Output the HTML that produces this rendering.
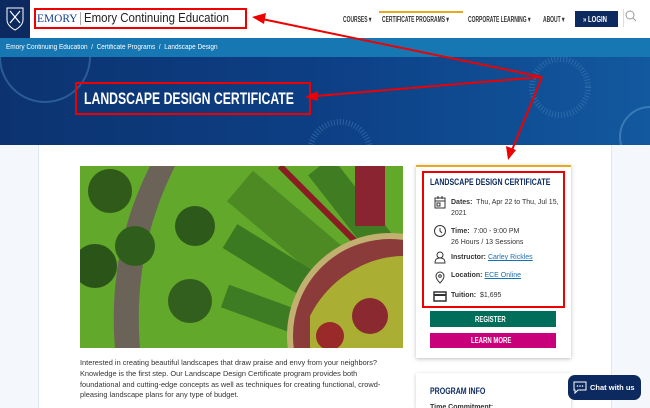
<!DOCTYPE html>
<html><head><style>
*{margin:0;padding:0;box-sizing:border-box}
html,body{width:650px;height:408px;overflow:hidden}
body{position:relative;font-family:"Liberation Sans",sans-serif;background:#fff}
.abs{position:absolute}
.cond{font-family:"Liberation Sans",sans-serif;font-weight:bold;transform-origin:left top;white-space:nowrap}
</style></head><body>
<!-- header -->
<div class="abs" style="left:0;top:0;width:30px;height:38px;background:#0c2a5f">
<svg width="30" height="38" viewBox="0 0 30 38"><path d="M7 8h16v12c0 6-8 10-8 10s-8-4-8-10z" fill="none" stroke="#fff" stroke-width="1"/><path d="M10 11l10 12M20 11l-10 12" stroke="#fff" stroke-width="1.2"/></svg></div>
<div class="abs" style="left:34px;top:8px;width:213px;height:21px;border:2px solid #e00"></div>
<div class="abs" style="left:37px;top:11px;font-family:'Liberation Serif',serif;font-size:12px;color:#123f8a;transform:scaleX(.95);transform-origin:left">EMORY</div>
<div class="abs" style="left:80px;top:12px;width:1px;height:13px;background:#aaa"></div>
<div class="abs" style="left:84px;top:10px;font-size:13px;color:#222;transform:scaleX(.88);transform-origin:left;white-space:nowrap">Emory Continuing Education</div>
<div class="abs cond" style="left:343px;top:15px;font-size:8px;color:#333;transform:scaleX(.62)">COURSES ▾</div>
<div class="abs" style="left:379px;top:11px;width:84px;height:2px;background:#e8a820"></div>
<div class="abs cond" style="left:382px;top:15px;font-size:8px;color:#333;transform:scaleX(.62)">CERTIFICATE PROGRAMS ▾</div>
<div class="abs cond" style="left:468px;top:15px;font-size:8px;color:#333;transform:scaleX(.62)">CORPORATE LEARNING ▾</div>
<div class="abs cond" style="left:543px;top:15px;font-size:8px;color:#333;transform:scaleX(.62)">ABOUT ▾</div>
<div class="abs" style="left:575px;top:11px;width:43px;height:16px;background:#0c2a5f"></div>
<div class="abs cond" style="left:583px;top:15px;font-size:8px;color:#fff;transform:scaleX(.75)">» LOGIN</div>
<div class="abs" style="left:623px;top:9px;width:1px;height:18px;background:#ddd"></div>
<svg class="abs" style="left:625px;top:10px" width="12" height="12"><circle cx="5" cy="5" r="4" fill="none" stroke="#999"/><path d="M8 8l3 3" stroke="#999"/></svg>
<!-- breadcrumb -->
<div class="abs" style="left:0;top:38px;width:650px;height:19px;background:#1777b2"></div>
<div class="abs" style="left:6px;top:44px;font-size:7px;color:#fff;white-space:nowrap;transform:scaleX(.92);transform-origin:left">Emory Continuing Education &nbsp;/&nbsp; Certificate Programs &nbsp;/&nbsp; Landscape Design</div>
<!-- hero -->
<div class="abs" style="left:0;top:57px;width:650px;height:88px;background:linear-gradient(90deg,#0c3370 0%,#0d3f85 50%,#12599f 100%);overflow:hidden">
<svg width="650" height="88"><circle cx="560" cy="30" r="28" fill="none" stroke="#2c6aa8" stroke-width="6" stroke-dasharray="1 2"/><circle cx="340" cy="95" r="30" fill="none" stroke="#2a62a0" stroke-width="6" stroke-dasharray="1 2"/><circle cx="45" cy="0" r="45" fill="none" stroke="#2a5c96" stroke-width="2"/><circle cx="650" cy="80" r="30" fill="none" stroke="#3a7ab4" stroke-width="2"/></svg></div>
<div class="abs" style="left:75px;top:82px;width:236px;height:33px;border:2px solid #e00"></div>
<div class="abs cond" style="left:84px;top:89px;font-size:17px;color:#fff;transform:scaleX(.72)">LANDSCAPE DESIGN CERTIFICATE</div>
<!-- side strips -->
<div class="abs" style="left:0;top:145px;width:39px;height:263px;background:#f4f8fc;border-right:1px solid #dbe7f2"></div>
<div class="abs" style="left:611px;top:145px;width:39px;height:263px;background:#f4f8fc;border-left:1px solid #dbe7f2"></div>
<!-- image -->
<div class="abs" style="left:80px;top:166px;width:323px;height:182px;background:#5a9a2a;overflow:hidden">
<svg width="323" height="182" viewBox="0 0 323 182">
<rect width="323" height="182" fill="#62a82a"/>
<path d="M70 0C40 60 30 120 35 182H60C55 120 65 60 95 0z" fill="#6b6358"/>
<circle cx="30" cy="25" r="22" fill="#2f5a1a"/><circle cx="15" cy="100" r="22" fill="#2a5418"/><circle cx="55" cy="80" r="20" fill="#2f5e1c"/><circle cx="115" cy="60" r="20" fill="#2d5a1a"/><circle cx="110" cy="135" r="22" fill="#335f1e"/>
<path d="M160 20l130 110" stroke="#4d8a24" stroke-width="40"/><path d="M200 0l100 100" stroke="#8a1c24" stroke-width="6"/><path d="M240 0l70 90" stroke="#3f7c22" stroke-width="30"/>
<path d="M150 70l130 80" stroke="#3b7a20" stroke-width="28"/><path d="M145 130l110 40" stroke="#3d7c22" stroke-width="24"/><path d="M290 0v60" stroke="#8a2430" stroke-width="30"/>
<circle cx="310" cy="170" r="100" fill="#8a3b3a"/><circle cx="310" cy="170" r="100" fill="none" stroke="#c2b070" stroke-width="6"/>
<path d="M230 150c20-40 60-60 93-60v92h-93z" fill="#b8e030" opacity=".7"/><circle cx="290" cy="150" r="18" fill="#8a2a30"/><circle cx="250" cy="170" r="14" fill="#9a2a2a"/>
</svg></div>
<div class="abs" style="left:80px;top:358px;width:312px;font-size:7.4px;line-height:10.8px;color:#333">Interested in creating beautiful landscapes that draw praise and envy from your neighbors? Knowledge is the first step. Our Landscape Design Certificate program provides both foundational and cutting-edge concepts as well as techniques for creating functional, crowd-pleasing landscape plans for any type of budget.</div>
<!-- card -->
<div class="abs" style="left:416px;top:165px;width:155px;height:193px;background:#fff;border-top:2px solid #e8a820;box-shadow:0 1px 4px rgba(0,0,0,.25)"></div>
<div class="abs" style="left:422px;top:171px;width:143px;height:137px;border:2px solid #e00"></div>
<div class="abs cond" style="left:430px;top:177px;font-size:9px;color:#0c2a5f;transform:scaleX(.78)">LANDSCAPE DESIGN CERTIFICATE</div>
<div class="abs" style="left:451px;top:197px;font-size:7px;line-height:11px;color:#333;width:115px"><b>Dates:</b>&nbsp; Thu, Apr 22 to Thu, Jul 15, 2021</div>
<div class="abs" style="left:451px;top:226px;font-size:7px;line-height:11px;color:#333"><b>Time:</b>&nbsp; 7:00 - 9:00 PM<br>26 Hours / 13 Sessions</div>
<div class="abs" style="left:451px;top:254px;font-size:7px;color:#333"><b>Instructor:</b> <span style="color:#1a6fb0;text-decoration:underline">Carley Rickles</span></div>
<div class="abs" style="left:451px;top:272px;font-size:7px;color:#333"><b>Location:</b> <span style="color:#1a6fb0;text-decoration:underline">ECE Online</span></div>
<div class="abs" style="left:451px;top:292px;font-size:7px;color:#333"><b>Tuition:</b>&nbsp; $1,695</div>
<svg class="abs" style="left:432px;top:195px" width="16" height="110" viewBox="0 0 16 110" fill="none" stroke="#333" stroke-width="1">
<rect x="3" y="3" width="10" height="10"/><path d="M3 6h10M6 1v3M10 1v3"/><rect x="5" y="8" width="3" height="3"/>
<circle cx="8" cy="36" r="5.5"/><path d="M8 33v3l2 2"/>
<circle cx="8" cy="60" r="3"/><path d="M3 68c0-4 2-5 5-5s5 1 5 5z"/>
<path d="M8 88s-4-4-4-7a4 4 0 018 0c0 3-4 7-4 7z"/><circle cx="8" cy="81" r="1.3"/>
<rect x="2" y="97" width="12" height="9" stroke-width="1.5"/><path d="M2 100h12" stroke-width="2"/>
</svg>
<div class="abs" style="left:430px;top:311px;width:126px;height:16px;background:#006e5a"></div>
<div class="abs cond" style="left:475px;top:315px;font-size:8px;color:#fff;transform:scaleX(.75)">REGISTER</div>
<div class="abs" style="left:430px;top:333px;width:126px;height:15px;background:#c8007a"></div>
<div class="abs cond" style="left:471px;top:336px;font-size:8px;color:#fff;transform:scaleX(.75)">LEARN MORE</div>
<div class="abs" style="left:416px;top:373px;width:155px;height:35px;background:#fff;box-shadow:0 1px 4px rgba(0,0,0,.2)"></div>
<div class="abs cond" style="left:430px;top:386px;font-size:9px;color:#0c2a5f;transform:scaleX(.78)">PROGRAM INFO</div>
<div class="abs" style="left:430px;top:403px;font-size:7px;font-weight:bold;color:#333;height:5px;overflow:hidden;line-height:9px">Time Commitment:</div>
<div class="abs" style="left:568px;top:375px;width:73px;height:25px;background:#0c2a5f;border-radius:7px;color:#fff;font-size:7.5px;font-weight:bold;line-height:25px;padding-left:22px;white-space:nowrap">Chat with us</div>
<svg class="abs" style="left:573px;top:381px" width="14" height="13"><path d="M1 1h12v8H5l-3 3V9H1z" fill="none" stroke="#fff"/><circle cx="4.5" cy="5" r=".8" fill="#fff"/><circle cx="7" cy="5" r=".8" fill="#fff"/><circle cx="9.5" cy="5" r=".8" fill="#fff"/></svg>
<!-- arrows -->
<svg class="abs" style="left:0;top:0" width="650" height="408">
<g stroke="#e00" stroke-width="2" fill="#e00">
<line x1="542" y1="77" x2="262" y2="19"/><polygon points="252,17 266,13 264,24" stroke="none"/>
<line x1="542" y1="77" x2="316" y2="96"/><polygon points="305,97 318,91 318,101" stroke="none"/>
<line x1="542" y1="77" x2="512" y2="150"/><polygon points="508,160 506,146 516,150" stroke="none"/>
</g></svg>
</body></html>
